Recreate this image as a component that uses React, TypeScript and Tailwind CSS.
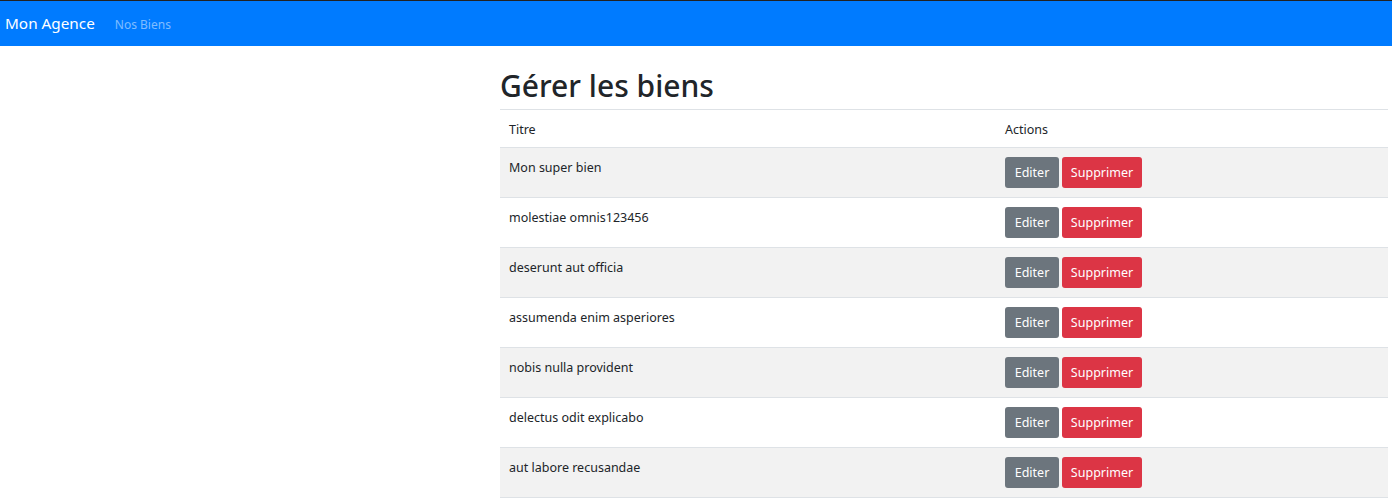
import React from "react";

const rows = [
  "Mon super bien",
  "molestiae omnis123456",
  "deserunt aut officia",
  "assumenda enim asperiores",
  "nobis nulla provident",
  "delectus odit explicabo",
  "aut labore recusandae",
];

export default function App() {
  return (
    <div className="min-h-[502px] bg-white text-[#212529]" style={{ fontFamily: '"Noto Sans", "Open Sans", sans-serif' }}>
      <nav className="h-[46px] bg-[#007bff] border-t border-[#222] flex items-center px-[5px]">
        <span className="text-white text-[15.3px] mr-[20px]">Mon Agence</span>
        <span className="text-white/50 text-[12px] mt-[2px]">Nos Biens</span>
      </nav>
      <div className="flex">
        <div className="w-[500px] shrink-0" />
        <div className="flex-1 pr-[4px]">
          <h1 className="text-[30px] font-medium leading-[38px] mt-[21px] mb-[4px]">Gérer les biens</h1>
          <table className="w-full border-collapse text-[12.5px]">
            <thead>
              <tr className="border-t border-[#dee2e6] border-b border-b-[#dee2e6]">
                <th className="text-left font-normal px-[9px] pt-[10px] pb-[8px] leading-[19px] w-[496px]">Titre</th>
                <th className="text-left font-normal px-[9px] pt-[10px] pb-[8px] leading-[19px]">Actions</th>
              </tr>
            </thead>
            <tbody>
              {rows.map((r, i) => (
                <tr key={i} className={`border-b border-[#dee2e6] ${i % 2 === 0 ? "bg-[#f2f2f2]" : "bg-white"}`}>
                  <td className="align-top px-[9px] pt-[10px] pb-[8px] leading-[19px]">{r}</td>
                  <td className="align-top px-[9px] pt-[9px] pb-[9px]">
                    <div className="flex gap-[3px]">
                      <button className="h-[31px] w-[54px] rounded-[3px] bg-[#6c757d] text-white text-[12.5px] pt-[2px] flex items-center justify-center">Editer</button>
                      <button className="h-[31px] w-[80px] rounded-[3px] bg-[#dc3545] text-white text-[12.5px] pt-[2px] flex items-center justify-center">Supprimer</button>
                    </div>
                  </td>
                </tr>
              ))}
            </tbody>
          </table>
        </div>
      </div>
    </div>
  );
}
